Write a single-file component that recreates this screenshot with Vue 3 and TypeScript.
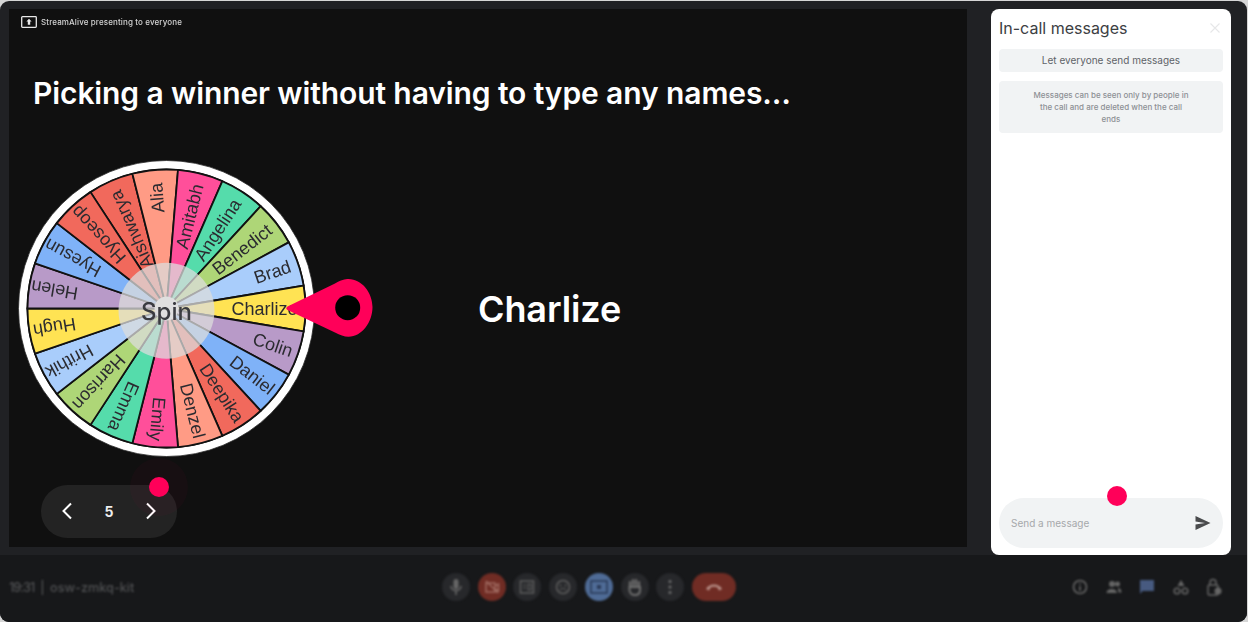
<script setup lang="ts">
// Each label keeps its own distance from the hub: the labels are not quite concentric with the rim.
const labels: [string, number][] = [
  ['Aishwarya', 128], ['Alia', 126], ['Amitabh', 128], ['Angelina', 129], ['Benedict', 131],
  ['Brad', 131], ['Charlize', 131], ['Colin', 133], ['Daniel', 134], ['Deepika', 134],
  ['Denzel', 133.5], ['Emily', 133], ['Emma', 133], ['Harrison', 134], ['Hrithik', 136],
  ['Hugh', 135], ['Helen', 137], ['Hyesun', 137], ['Hyoseop', 136],
]
const palette = ['#f1695c','#ff9b85','#ff4f9a','#55dcab','#aed677','#a9cdfb','#ffe353','#b89ac8','#7fb2f8']
const cx = 157.5
const cy = 154.5
const R = 139
const step = 360 / labels.length
const pt = (deg: number, r: number) => {
  const a = (deg * Math.PI) / 180
  return `${(cx + r * Math.cos(a)).toFixed(2)} ${(cy + r * Math.sin(a)).toFixed(2)}`
}
const segments = labels.map(([name, reach], i) => {
  const mid = (i - 6) * step
  return {
    name,
    x: cx + reach,
    fill: palette[i % palette.length],
    d: `M ${cx} ${cy} L ${pt(mid - step / 2, R)} A ${R} ${R} 0 0 1 ${pt(mid + step / 2, R)} Z`,
    transform: `rotate(${mid.toFixed(3)} ${cx} ${cy})`,
  }
})
</script>

<template>
  <div class="screen">
    <div class="stage">
      <section class="slide">
        <div class="presenter">
          <svg class="present-icon" width="16" height="12" viewBox="0 0 16 12">
            <rect x="0.7" y="0.7" width="14.6" height="10.6" rx="0.8" fill="none" stroke="#e8e8e8" stroke-width="1.3" />
            <path d="M8 2.8 L10.6 5.6 H9.2 V8.8 H6.8 V5.6 H5.4 Z" fill="#e8e8e8" />
          </svg>
          <span>StreamAlive presenting to everyone</span>
        </div>
        <h1 class="title">Picking a winner without having to type any names…</h1>
        <div class="wheel-row">
          <svg class="wheel" width="370" height="310" viewBox="0 0 370 310">
            <g class="wheel-art">
              <circle :cx="cx" :cy="cy" r="148" fill="#fff" stroke="#2a2a2a" stroke-width="0.8" />
              <circle :cx="cx" :cy="cy" :r="R + 1" fill="#111" />
              <path v-for="s in segments" :key="s.name" :d="s.d" :fill="s.fill" stroke="#111" stroke-width="1.8" />
              <text
                v-for="s in segments"
                :key="'t' + s.name"
                :transform="s.transform"
                :x="s.x"
                :y="cy"
                class="seg-label"
                text-anchor="end"
                dominant-baseline="central"
              >{{ s.name }}</text>
              <circle :cx="cx" :cy="cy" r="12" fill="#e8e8e8" />
              <circle :cx="cx" :cy="cy + 2.2" r="48" fill="#dcdcdc" fill-opacity="0.75" />
              <text :x="cx" :y="cy + 3" class="spin" text-anchor="middle" dominant-baseline="central">Spin</text>
            </g>
            <path d="M278.500 152.500 L326 129.500 C332 126 336 125 339.500 125 C353 125 363.500 139 363.500 153 C363.500 168 353 182.700 339.500 182.700 C335 182.700 331 181 326 178.500 L278.500 156 Q276 154.300 278.500 152.500 Z" fill="#ff0059" />
            <circle cx="338.700" cy="153.700" r="12.500" fill="#000" />
          </svg>
          <div class="winner">Charlize</div>
        </div>
        <div class="pager">
          <svg width="12" height="18" viewBox="0 0 12 18"><path d="M10 1.500 L2.500 9 L10 16.500" fill="none" stroke="#fff" stroke-width="2" /></svg>
          <span>5</span>
          <svg width="12" height="18" viewBox="0 0 12 18"><path d="M2 1.500 L9.500 9 L2 16.500" fill="none" stroke="#fff" stroke-width="2" /></svg>
        </div>
        <i class="cursor-halo"></i>
        <i class="cursor cursor-slide"></i>
      </section>

      <aside class="chat">
        <header class="chat-head">
          <h2>In-call messages</h2>
          <svg width="10" height="10" viewBox="0 0 10 10"><path d="M0.500 0.500 L9.500 9.500 M9.500 0.500 L0.500 9.500" stroke="#e6e7e8" stroke-width="1.100" /></svg>
        </header>
        <div class="let-all">Let everyone send messages</div>
        <p class="note">Messages can be seen only by people in the call and are deleted when the call ends</p>
        <div class="composer">
          <span>Send a message</span>
          <svg width="16" height="14" viewBox="0 0 16 14"><path d="M0.500 0 L15.500 7 L0.500 14 V8.500 L10 7 L0.500 5.500 Z" fill="#4a4b4d" /></svg>
        </div>
        <i class="cursor cursor-chat"></i>
      </aside>
    </div>

    <footer class="bar">
      <div class="meeting"><span class="time">19:31</span><span class="sep">|</span><span>osw-zmkq-kit</span></div>
      <div class="controls">
        <button class="ctl">
          <svg width="16" height="18" viewBox="0 0 16 18"><rect x="5.500" y="1" width="5" height="10" rx="2.500" fill="#666" /><path d="M3 8 C3 14 13 14 13 8 M8 12 V17" fill="none" stroke="#666" stroke-width="1.600" /></svg>
        </button>
        <button class="ctl red">
          <svg width="16" height="16" viewBox="0 0 16 16"><rect x="2" y="4" width="9" height="9" fill="none" stroke="#a06a60" stroke-width="1.500" /><path d="M11 7 L14.500 5 V12 L11 10 M2 2 L14 14" fill="none" stroke="#a06a60" stroke-width="1.500" /></svg>
        </button>
        <button class="ctl">
          <svg width="16" height="16" viewBox="0 0 16 16"><rect x="1.500" y="2" width="13" height="12" fill="none" stroke="#5e5e5e" stroke-width="1.500" /><path d="M4 6 H7 M4 9 H7 M9 5 H12 V11 H9 Z" fill="none" stroke="#5e5e5e" stroke-width="1.200" /></svg>
        </button>
        <button class="ctl">
          <svg width="16" height="16" viewBox="0 0 16 16"><circle cx="8" cy="8" r="6.500" fill="none" stroke="#5e5e5e" stroke-width="1.500" /><circle cx="5.500" cy="6.500" r="1" fill="#5e5e5e" /><circle cx="10.500" cy="6.500" r="1" fill="#5e5e5e" /><path d="M5 11 C6 9 10 9 11 11" fill="none" stroke="#5e5e5e" stroke-width="1.200" /></svg>
        </button>
        <button class="ctl blue">
          <svg width="18" height="14" viewBox="0 0 18 14"><rect x="1" y="1" width="16" height="12" fill="none" stroke="#2a3a58" stroke-width="1.600" /><rect x="7" y="5" width="4" height="4" fill="#2a3a58" /></svg>
        </button>
        <button class="ctl">
          <svg width="16" height="18" viewBox="0 0 16 18"><path d="M3 8 V4 M6 7 V2 M9 7 V2 M12 8 V4" stroke="#6e6e6e" stroke-width="2.200" stroke-linecap="round" /><path d="M2.500 9 H13 V12 C13 15 11 17 8 17 C5 17 2.500 15 2.500 12 Z" fill="none" stroke="#6e6e6e" stroke-width="2" /></svg>
        </button>
        <button class="ctl">
          <svg width="4" height="16" viewBox="0 0 4 16"><circle cx="2" cy="2.500" r="1.500" fill="#6e6e6e" /><circle cx="2" cy="8" r="1.500" fill="#6e6e6e" /><circle cx="2" cy="13.500" r="1.500" fill="#6e6e6e" /></svg>
        </button>
        <button class="ctl end">
          <svg width="18" height="8" viewBox="0 0 18 8"><path d="M1 6 C4 0 14 0 17 6 L14 7.500 L12.500 4.500 C11 3.500 7 3.500 5.500 4.500 L4 7.500 Z" fill="#b89088" /></svg>
        </button>
      </div>
      <div class="tools">
        <svg width="16" height="16" viewBox="0 0 16 16"><circle cx="8" cy="8" r="6.500" fill="none" stroke="#666" stroke-width="1.600" /><path d="M8 7 V12 M8 4 V5.500" stroke="#666" stroke-width="1.600" /></svg>
        <svg width="16" height="14" viewBox="0 0 16 14"><circle cx="6" cy="4" r="3" fill="#666" /><circle cx="11.500" cy="4" r="2.500" fill="#666" /><path d="M0.500 13 C0.500 7.500 11 7.500 11 13 Z M12 8 C14 8 15.500 10 15.500 12.500 H12.500 Z" fill="#666" /></svg>
        <svg width="16" height="16" viewBox="0 0 16 16"><path d="M1 1 H15 V12 H3.500 L1 15 Z" fill="#475a80" /></svg>
        <svg width="16" height="16" viewBox="0 0 16 16"><path d="M8 1 L11.500 7 H4.500 Z" fill="#666" /><circle cx="4" cy="12" r="2.800" fill="none" stroke="#666" stroke-width="1.500" /><circle cx="12" cy="12" r="2.800" fill="none" stroke="#666" stroke-width="1.500" /></svg>
        <svg width="16" height="18" viewBox="0 0 16 18"><path d="M4 7 V4.500 C4 0.500 10 0.500 10 4.500 V7" fill="none" stroke="#666" stroke-width="1.500" /><rect x="2" y="7" width="10" height="10" rx="1.500" fill="none" stroke="#666" stroke-width="1.500" /><circle cx="12" cy="13" r="3.500" fill="#666" /></svg>
      </div>
    </footer>
  </div>
</template>

<style>
html, body { margin: 0; background: #d6d6d6; }
</style>

<style scoped>
.screen {
  box-sizing: border-box;
  width: 1247px;
  height: 621px;
  margin-top: 1px;
  display: flex;
  flex-direction: column;
  background: #202124;
  border-radius: 9px;
  overflow: hidden;
  font-family: Inter, "Liberation Sans", sans-serif;
}
.stage {
  display: flex;
  align-items: flex-start;
  gap: 24px;
  padding: 8px 0 0 9px;
  height: 554px;
  flex: none;
  box-sizing: border-box;
}
.slide {
  position: relative;
  width: 958px;
  height: 538px;
  flex: none;
  background: #101010;
  overflow: hidden;
}
.presenter {
  display: flex;
  align-items: center;
  gap: 4px;
  height: 26px;
  padding-left: 12px;
  color: #d4d4d4;
  font-size: 8px;
  font-weight: 500;
  letter-spacing: 0.13px;
}
.presenter span { filter: blur(0.3px); }
.title {
  margin: 36px 0 39px 24px;
  font-size: 30px;
  line-height: 44px;
  font-weight: 600;
  letter-spacing: -0.1px;
  color: #fff;
  white-space: nowrap;
}
.wheel-row {
  display: flex;
  align-items: center;
  height: 310px;
}
.wheel { flex: none; display: block; }
.wheel-art { filter: blur(0.35px); }
.seg-label {
  font-family: "Liberation Sans", Arial, sans-serif;
  font-size: 18px;
  fill: #2b2b30;
}
.spin {
  font-family: Inter, sans-serif;
  font-size: 24px;
  font-weight: 500;
  fill: #3a3b40;
}
.winner {
  margin-left: 99px;
  color: #fff;
  font-size: 36px;
  font-weight: 600;
  letter-spacing: -0.1px;
}
.pager {
  margin: 21px 0 0 32px;
  width: 136px;
  height: 53px;
  box-sizing: border-box;
  padding: 0 20px 1px;
  display: flex;
  align-items: center;
  justify-content: space-between;
  border-radius: 27px;
  background: #232323;
  color: #eee;
  font-size: 14px;
  font-weight: 700;
}
.cursor {
  position: absolute;
  width: 20px;
  height: 20px;
  border-radius: 50%;
  background: #ff0059;
}
.cursor-slide { left: 140px; top: 468px; }
.cursor-halo {
  position: absolute;
  left: 121px;
  top: 449px;
  width: 58px;
  height: 58px;
  border-radius: 50%;
  background: rgba(255, 0, 89, 0.03);
}
.chat {
  position: relative;
  box-sizing: border-box;
  width: 240px;
  height: 546px;
  flex: none;
  padding: 0 8px;
  display: flex;
  flex-direction: column;
  background: #fff;
  border-radius: 8px;
}
.chat-head {
  display: flex;
  align-items: center;
  justify-content: space-between;
  box-sizing: border-box;
  height: 40px;
  padding: 0 3px 2px 0;
}
.chat-head h2 {
  margin: 0;
  font-size: 16px;
  font-weight: 400;
  color: #3c4043;
}
.let-all {
  height: 23px;
  line-height: 23px;
  text-align: center;
  background: #f1f3f4;
  border-radius: 4px;
  color: #5f6368;
  font-size: 10px;
}
.note {
  margin: 9px 0 0;
  box-sizing: border-box;
  height: 52px;
  padding: 8px 32px;
  background: #f1f3f4;
  border-radius: 4px;
  text-align: center;
  font-size: 8px;
  line-height: 12px;
  font-weight: 500;
  color: #8d9094;
}
.composer {
  margin-top: auto;
  margin-bottom: 7px;
  height: 50px;
  box-sizing: border-box;
  padding: 0 12px;
  display: flex;
  align-items: center;
  justify-content: space-between;
  background: #f1f3f4;
  border-radius: 25px;
  color: #a6a8ab;
  font-size: 10px;
}
.cursor-chat { left: 116px; top: 477px; }
.bar {
  flex: 1;
  display: flex;
  align-items: center;
  justify-content: space-between;
  padding: 0 0 3px 9px;
  background: #17181a;
}
.bar > * { filter: blur(1px); }
.meeting {
  width: 433px;
  display: flex;
  align-items: center;
  color: #505153;
  font-size: 12.700px;
  font-weight: 500;
  white-space: nowrap;
}
.time { width: 26px; letter-spacing: -1px; }
.sep { width: 15px; text-align: center; }
.controls {
  display: flex;
  align-items: center;
  gap: 7.700px;
  flex: none;
  margin-right: 336px;
}
.ctl {
  width: 28px;
  height: 28px;
  padding: 0;
  border: 0;
  border-radius: 50%;
  background: #27282b;
  display: flex;
  align-items: center;
  justify-content: center;
}
.red { background: #702c24; }
.blue { background: #4f6b96; }
.end { width: 44px; border-radius: 14px; background: #702c24; }
.tools {
  display: flex;
  align-items: center;
  gap: 17.500px;
  margin-right: 25px;
}
</style>
